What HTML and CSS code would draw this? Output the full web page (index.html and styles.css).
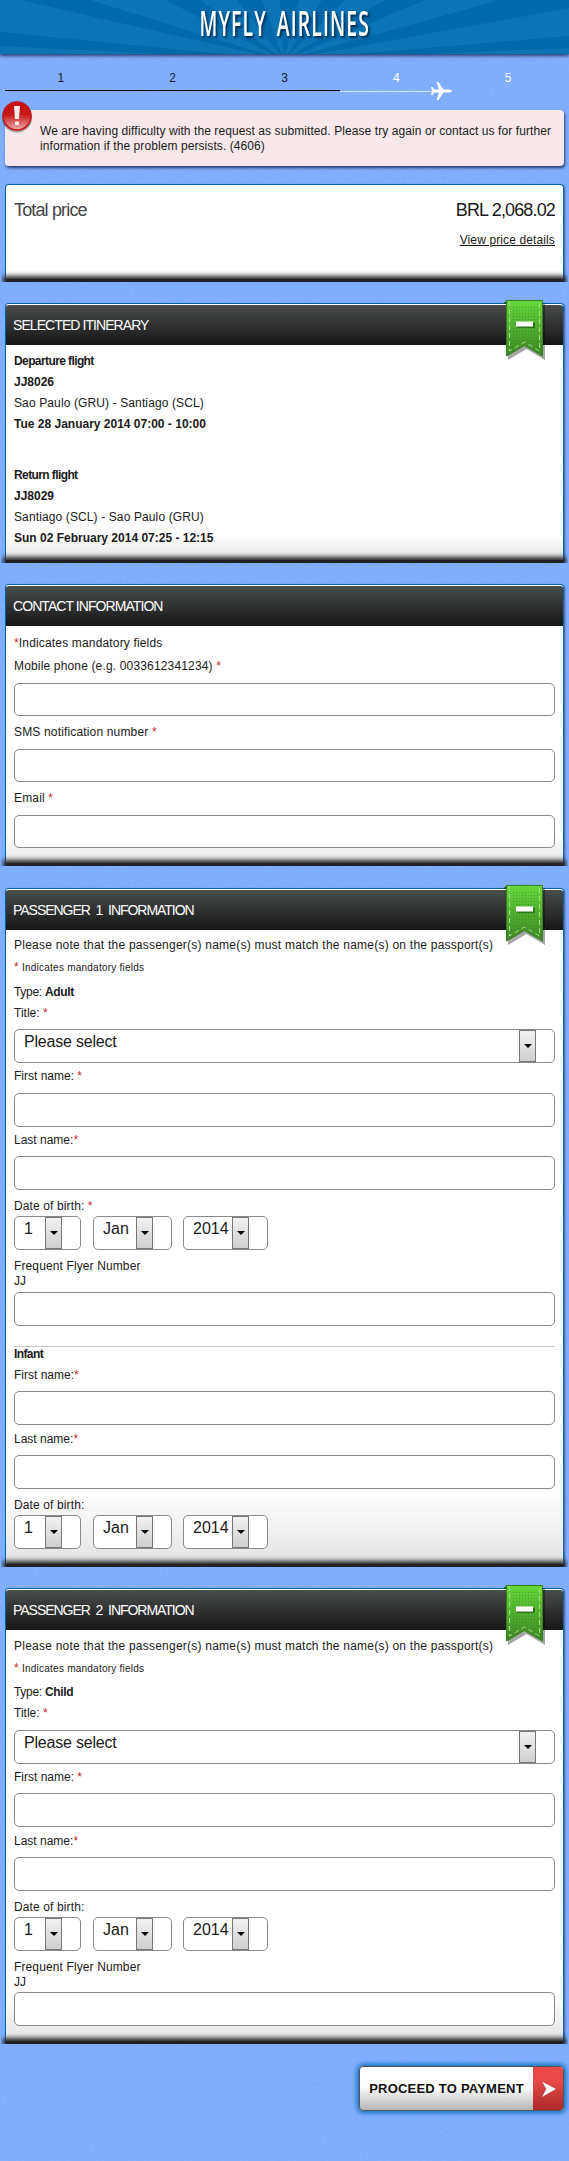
FILE: index.html
```html
<!DOCTYPE html>
<html lang="en">
<head>
<meta charset="utf-8">
<title>MyFly Airlines</title>
<link rel="stylesheet" href="styles.css">
</head>
<body>
<svg class="grain" width="569" height="2161" aria-hidden="true"><filter id="n"><feTurbulence type="fractalNoise" baseFrequency="0.35" numOctaves="2"/><feColorMatrix values="0 0 0 0 0.3  0 0 0 0 0.5  0 0 0 0 0.95  1.2 0 0 0 -0.42"/></filter><rect width="569" height="2161" filter="url(#n)"/></svg>
<svg width="0" height="0" class="defs" aria-hidden="true">
<defs>
<linearGradient id="g" x1="0" y1="0" x2="0" y2="1"><stop offset="0" stop-color="#66d83c"/><stop offset="1" stop-color="#3c8424"/></linearGradient>
<pattern id="dots" width="3" height="3" patternUnits="userSpaceOnUse"><rect x="1" y="1" width="1" height="1" fill="#2f8a1c" opacity=".6"/></pattern>
<symbol id="ribbon" viewBox="0 0 44 62">
<path d="M0 4 4 0V4Z" fill="#174d0c"/>
<path d="M5 3H42V60L23.500 49 5 60Z" fill="#000" opacity=".35"/>
<path d="M3.500 .5H39.500V56L21.500 45.500 3.500 56Z" fill="url(#g)" stroke="#367f1e"/>
<path d="M9 5H35V46H9Z" fill="url(#dots)"/>
<path d="M6.500 1V51L21.500 42 36.500 51V1" fill="none" stroke="#a3dc80" stroke-dasharray="5 3"/>
<rect x="14" y="23" width="18" height="5" fill="#1e5d10" opacity=".7"/>
<rect x="13" y="21.500" width="17" height="5" fill="#fff"/>
</symbol>
</defs>
</svg>

<header class="top">
<svg class="rays" viewBox="0 0 569 54" aria-hidden="true"><g fill="#0b74b6">
<path d="M284 60 0 32V0H20Z"/><path d="M284 60 90 0H165Z"/><path d="M284 60 200 0H237Z"/><path d="M284 60 262 0H280Z"/><path d="M284 60 299 0H322Z"/><path d="M284 60 345 0H385Z"/><path d="M284 60 425 0H500Z"/><path d="M284 60 569 8V36Z"/><path d="M284 60 0 57V46Z"/><path d="M284 60 569 57V48Z"/></g></svg>
<h1 class="brand">MYFLY AIRLINES</h1>
</header>

<ol class="steps">
<li>1</li><li>2</li><li>3</li><li class="now">4</li><li class="next">5</li>
</ol>
<div class="track"><span class="done"></span><span class="todo"></span>
<svg class="plane" width="21" height="18" viewBox="0 0 21 18" aria-hidden="true"><path d="M21 9C21 8 19 7.500 17 7.500H12.500L7.500 0H5.500L8 7.500H3.500L1.500 5H0L1.200 9 0 13H1.500L3.500 10.500H8L5.500 18H7.500L12.500 10.500H17C19 10.500 21 10 21 9Z" fill="#fff"/></svg></div>

<div class="alert">
<svg class="bang" width="31" height="32" viewBox="0 0 31 32" aria-hidden="true"><defs><linearGradient id="r" x1="0" y1="0" x2="0" y2="1"><stop offset="0" stop-color="#c90f0f"/><stop offset=".45" stop-color="#c81818"/><stop offset=".95" stop-color="#e8a0a0"/></linearGradient></defs><ellipse cx="15" cy="17" rx="15" ry="14.500" fill="#333" opacity=".4"/><circle cx="15" cy="15" r="14" fill="url(#r)" stroke="#c41414" stroke-width="1.500"/><path d="M12 5H18L17 18H13ZM13 20.500H17V24H13Z" fill="#fbeaea"/></svg>
<p>We are having difficulty with the request as submitted. Please try again or contact us for further<br>information if the problem persists. (4606)</p>
</div>

<section class="card price">
<div class="total"><span class="name">Total price</span><span class="sum">BRL 2,068.02</span></div>
<a class="details">View price details</a>
</section>

<section class="card">
<h2>SELECTED ITINERARY</h2><svg class="fold" width="44" height="62"><use href="#ribbon"/></svg>
<div class="body itinerary">
<b class="tight">Departure flight</b><b>JJ8026</b><p>Sao Paulo (GRU) - Santiago (SCL)</p><b>Tue 28 January 2014 07:00 - 10:00</b>
<b class="tight">Return flight</b><b>JJ8029</b><p>Santiago (SCL) - Sao Paulo (GRU)</p><b>Sun 02 February 2014 07:25 - 12:15</b>
</div>
</section>

<section class="card">
<h2>CONTACT INFORMATION</h2>
<div class="body contact">
<p><i>*</i>Indicates mandatory fields</p>
<p>Mobile phone (e.g. 0033612341234) <i>*</i></p><input class="field">
<p>SMS notification number <i>*</i></p><input class="field">
<p>Email <i>*</i></p><input class="field">
</div>
</section>

<section class="card">
<h2 class="pax">PASSENGER&nbsp; 1&nbsp; INFORMATION</h2><svg class="fold" width="44" height="62"><use href="#ribbon"/></svg>
<div class="body adult">
<p class="note">Please note that the passenger(s) name(s) must match the name(s) on the passport(s)</p>
<p class="hint"><i>*</i> Indicates mandatory fields</p>
<p class="type">Type: <b>Adult</b></p>
<p class="snug">Title: <i>*</i></p>
<div class="pick wide"><span>Please select</span><em></em></div>
<p class="snug">First name: <i>*</i></p><input class="field">
<p class="snug">Last name:<i>*</i></p><input class="field">
<p>Date of birth: <i>*</i></p>
<div class="dates"><div class="pick day"><span>1</span><em></em></div><div class="pick month"><span>Jan</span><em></em></div><div class="pick year"><span>2014</span><em></em></div></div>
<p>Frequent Flyer Number</p><p>JJ</p><input class="field">
<hr>
<b class="tight">Infant</b>
<p class="snug">First name:<i>*</i></p><input class="field">
<p class="snug">Last name:<i>*</i></p><input class="field">
<p>Date of birth:</p>
<div class="dates"><div class="pick day"><span>1</span><em></em></div><div class="pick month"><span>Jan</span><em></em></div><div class="pick year"><span>2014</span><em></em></div></div>
</div>
</section>

<section class="card">
<h2 class="pax">PASSENGER&nbsp; 2&nbsp; INFORMATION</h2><svg class="fold" width="44" height="62"><use href="#ribbon"/></svg>
<div class="body child">
<p class="note">Please note that the passenger(s) name(s) must match the name(s) on the passport(s)</p>
<p class="hint"><i>*</i> Indicates mandatory fields</p>
<p class="type">Type: <b>Child</b></p>
<p class="snug">Title: <i>*</i></p>
<div class="pick wide"><span>Please select</span><em></em></div>
<p class="snug">First name: <i>*</i></p><input class="field">
<p class="snug">Last name:<i>*</i></p><input class="field">
<p>Date of birth:</p>
<div class="dates"><div class="pick day"><span>1</span><em></em></div><div class="pick month"><span>Jan</span><em></em></div><div class="pick year"><span>2014</span><em></em></div></div>
<p>Frequent Flyer Number</p><p>JJ</p><input class="field">
</div>
</section>

<div class="actions"><button class="proceed"><span>PROCEED TO PAYMENT</span><svg width="30" height="44" viewBox="0 0 30 44" aria-hidden="true"><path d="M8.500 14 23.500 22 8.500 30.500 13 22Z" fill="#fff" stroke="#a33" stroke-width=".5"/></svg></button></div>
</body>
</html>
```
FILE: styles.css
```css
* { box-sizing: border-box; }
body {
  margin: 0;
  width: 569px;
  height: 2161px;
  overflow: hidden;
  position: relative;
  background: #7eadff;
  color: #1a1a1a;
  font: 12px/16px "Liberation Sans", Arial, sans-serif;
}
p, h1, h2, ol { margin: 0; padding: 0; font-weight: normal; }
p { letter-spacing: .12px; }
i { font-style: normal; color: #c4282d; }
.grain { position: absolute; top: 0; left: 0; z-index: -1; opacity: .5; }
.defs { position: absolute; }

.top {
  position: relative;
  height: 54px;
  background: #0068ab;
  box-shadow: 0 2px 3px rgba(20, 35, 80, .8);
  display: flex;
  justify-content: center;
}
.rays { position: absolute; inset: 0; width: 569px; height: 54px; }
.brand {
  position: relative;
  color: #fff;
  font: 35px/46px "Open Sans", sans-serif;
  font-weight: 600;
  letter-spacing: 2px;
  word-spacing: 7px;
  white-space: nowrap;
  transform: scaleX(.555);
  text-shadow: 3px 2px 3px #002a4d;
}

.steps { display: flex; list-style: none; padding: 16px 5px 0; height: 36px; }
.steps li { width: 111.800px; text-align: center; font-size: 12px; }
.now, .next { color: #fff; }
.track { display: flex; align-items: flex-start; height: 20px; padding-left: 5px; }
.done { width: 335px; height: 1px; background: #000; }
.todo { width: 92px; height: 1px; margin-top: 1px; background: #d5e3ff; }
.plane { margin: -8px 0 0 -1px; }

.alert {
  position: relative;
  margin: 0 5px;
  height: 56px;
  padding: 14px 0 0 35px;
  border-radius: 4px;
  background: #f8e8eb;
  box-shadow: 1px 2px 3px rgba(20, 30, 70, .8);
  line-height: 15px;
  white-space: nowrap;
}
.alert p { letter-spacing: .08px; }
.bang { position: absolute; left: -3px; top: -9px; }

.card {
  position: relative;
  margin: 0 5px 21px;
  border: 1px solid #0065a8;
  border-bottom: 0;
  border-radius: 4px 4px 2px 2px;
  background: linear-gradient(#fff 89%, #e2e2e2);
  box-shadow: 1px 1px 2px rgba(10, 30, 80, .6);
  clip-path: inset(-10px -4px 0 -4px);
}
.card:has(.contact) { margin-bottom: 22px; }
.card::after {
  content: "";
  position: absolute;
  left: 0;
  right: 0;
  bottom: 0;
  height: 3px;
  background: #222;
  box-shadow: 0 0 5px 3px #222;
}
.price { margin-top: 18px; height: 98px; background: #fff; padding: 15px 8px 0; }
.total { display: flex; justify-content: space-between; font-size: 18px; line-height: 20px; letter-spacing: -.85px; }
.name { color: #444; }
.details { display: block; text-align: right; margin-top: 12px; text-decoration: underline; letter-spacing: .12px; }

h2 {
  height: 41px;
  border-top: 1px solid #fff;
  border-radius: 3px 3px 0 0;
  background: linear-gradient(#4a4d4c, #161616);
  padding-left: 7px;
  color: #fff;
  font-size: 14px;
  line-height: 41px;
  letter-spacing: -.93px;
}
.pax { letter-spacing: -1.030px; }
.fold { position: absolute; right: 16px; top: -4px; }
.body { display: grid; align-items: end; padding: 0 8px; white-space: nowrap; }
.itinerary { grid-template-rows: 24px 21px 21px 21px 51px 21px 21px 21px 17px; }
.contact { grid-template-rows: 25px 23px 42px 24px 42px 24px 42px 18px; }
.adult { grid-template-rows: 23px 23px 24px 21px 42px 21px 43px 21px 42px 24px 36px 24px 15px 37px 21px 15px 21px 42px 22px 42px 24px 36px 18px; }
.child { grid-template-rows: 24px 23px 23px 21px 43px 21px 42px 22px 42px 24px 36px 24px 15px 36px 18px; }
.tight { letter-spacing: -.6px; }
.note { letter-spacing: .23px; }
.snug { letter-spacing: 0; }
.type { letter-spacing: -.3px; }
.hint { font-size: 10px; letter-spacing: .24px; }
.hint i { font-size: 12px; }
.contact p { letter-spacing: .16px; }
.field, .pick {
  width: 541px;
  height: 34px;
  border: 1px solid #8a8a8a;
  border-radius: 5px;
  background: #fff;
  padding: 0;
  margin: 0;
}
.contact .field { height: 33px; }
.pick { display: flex; font-size: 16px; line-height: 23px; justify-content: space-between; }
.pick span { padding-left: 9px; }
.wide span { letter-spacing: -.2px; }
.pick em {
  width: 17px;
  margin-right: 18px;
  border: 1px solid #777;
  background: linear-gradient(#f2f2f2, #cfcfcf);
  display: flex;
  align-items: center;
  justify-content: center;
}
.pick em::before {
  content: "";
  border: 4px solid transparent;
  border-top-color: #000;
  border-bottom: 0;
}
.dates { display: flex; }
.day { width: 67px; margin-right: 12px; }
.month { width: 79px; margin-right: 11px; }
.year { width: 85px; }
hr { width: 541px; margin: 0; border: 0; height: 1px; background: #c9c9c9; }

.actions { display: flex; justify-content: flex-end; padding: 1px 5px; }
.proceed {
  display: flex;
  align-items: center;
  width: 205px;
  height: 45px;
  padding: 0;
  border: 1px solid #555;
  border-radius: 4px;
  overflow: hidden;
  background: linear-gradient(#fff 45%, #b5b5b5);
  box-shadow: 0 0 5px 2px #0d6fbd;
  color: #111;
  font: bold 13px "Liberation Sans", Arial, sans-serif;
  letter-spacing: .22px;
  white-space: nowrap;
}
.proceed span { width: 173px; }
.proceed svg { background: linear-gradient(#e84a4a 30%, #a82828); }
```
